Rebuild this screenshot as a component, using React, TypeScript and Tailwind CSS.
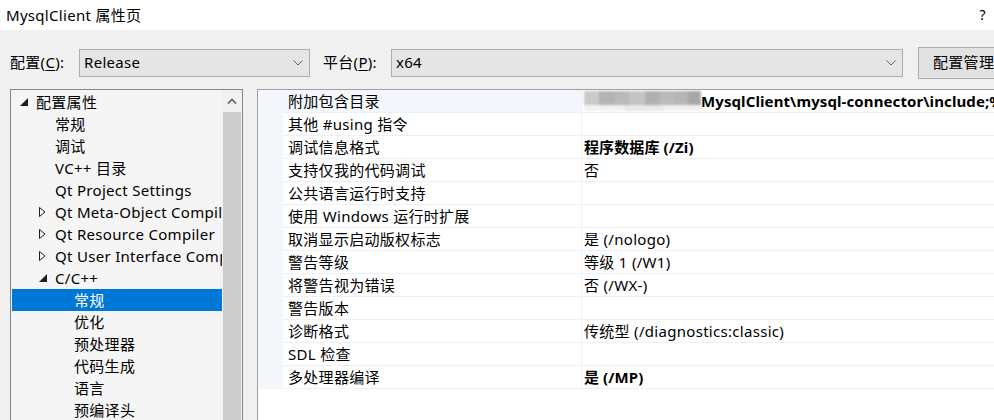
import React from "react";

type TreeItem = {
  label: string;
  level: number;
  arrow?: "open" | "closed";
  selected?: boolean;
};

const treeItems: TreeItem[] = [
  { label: "配置属性", level: 0, arrow: "open" },
  { label: "常规", level: 1 },
  { label: "调试", level: 1 },
  { label: "VC++ 目录", level: 1 },
  { label: "Qt Project Settings", level: 1 },
  { label: "Qt Meta-Object Compiler", level: 1, arrow: "closed" },
  { label: "Qt Resource Compiler", level: 1, arrow: "closed" },
  { label: "Qt User Interface Compiler", level: 1, arrow: "closed" },
  { label: "C/C++", level: 1, arrow: "open" },
  { label: "常规", level: 2, selected: true },
  { label: "优化", level: 2 },
  { label: "预处理器", level: 2 },
  { label: "代码生成", level: 2 },
  { label: "语言", level: 2 },
  { label: "预编译头", level: 2 },
  { label: "输出文件", level: 2 },
];

type PropRow = { name: string; value?: string; bold?: boolean; blurred?: boolean };

const propRows: PropRow[] = [
  { name: "附加包含目录", value: "MysqlClient\\mysql-connector\\include;%(AdditionalIncludeDirectories)", bold: true, blurred: true },
  { name: "其他 #using 指令" },
  { name: "调试信息格式", value: "程序数据库 (/Zi)", bold: true },
  { name: "支持仅我的代码调试", value: "否" },
  { name: "公共语言运行时支持" },
  { name: "使用 Windows 运行时扩展" },
  { name: "取消显示启动版权标志", value: "是 (/nologo)" },
  { name: "警告等级", value: "等级 1 (/W1)" },
  { name: "将警告视为错误", value: "否 (/WX-)" },
  { name: "警告版本" },
  { name: "诊断格式", value: "传统型 (/diagnostics:classic)" },
  { name: "SDL 检查" },
  { name: "多处理器编译", value: "是 (/MP)", bold: true },
];

const Chevron = () => (
  <svg width="10" height="6" viewBox="0 0 10 6" fill="none" stroke="#606060" strokeWidth="1">
    <path d="M0.5 0.5 L5 5 L9.5 0.5" />
  </svg>
);

const Arrow = ({ kind, selected }: { kind: "open" | "closed"; selected?: boolean }) =>
  kind === "open" ? (
    <svg width="8" height="8" viewBox="0 0 8 8">
      <path d="M8 0 L8 8 L0 8 Z" fill={selected ? "#fff" : "#1e1e1e"} />
    </svg>
  ) : (
    <svg width="7" height="10" viewBox="0 0 7 10" fill="none" stroke="#1e1e1e" strokeWidth="1">
      <path d="M0.5 0.5 L6 5 L0.5 9.5 Z" />
    </svg>
  );

const Combo = ({ value, width }: { value: string; width: string }) => (
  <div className={`${width} h-[28px] border border-[#adadad] bg-[#e5e5e5] flex items-center justify-between pl-[4px] pr-[6px] shrink-0`}>
    <span>{value}</span>
    <Chevron />
  </div>
);

export default function App() {
  return (
    <div className="w-[994px] h-[420px] overflow-hidden bg-[#f0f0f0] text-[15px] tracking-[0.3px] text-black font-['Noto_Sans','Noto_Sans_CJK_SC',sans-serif] leading-none">
      {/* title bar */}
      <div className="h-[30px] bg-white flex items-center justify-between pl-[6px] pr-[8px]">
        <span>MysqlClient 属性页</span>
        <span className="text-[14px]">?</span>
      </div>

      {/* configuration row */}
      <div className="flex items-center pl-[10px] pt-[17px] h-[48px] whitespace-nowrap">
        <span className="w-[69px] shrink-0">
          配置(<span className="underline underline-offset-2">C</span>):
        </span>
        <Combo value="Release" width="w-[231px]" />
        <span className="ml-[13px] w-[68px] shrink-0">
          平台(<span className="underline underline-offset-2">P</span>):
        </span>
        <Combo value="x64" width="w-[512px]" />
        <div className="ml-[15px] h-[32px] w-[110px] shrink-0 border border-[#adadad] bg-[#e1e1e1] flex items-center pl-[14px]">
          配置管理器(O)...
        </div>
      </div>

      {/* panels */}
      <div className="flex gap-[14px] pl-[10px] mt-[11px] h-[340px]">
        {/* tree */}
        <div className="w-[233px] shrink-0 border border-[#828790] bg-[#f5f5f5] flex">
          <div className="flex-1 overflow-hidden pt-[1px]">
            {treeItems.map((it, i) => (
              <div
                key={i}
                className={`h-[22px] ml-[1px] flex items-center whitespace-nowrap ${it.selected ? "bg-[#0078d7] text-white" : ""}`}
                style={{ paddingLeft: 7 + it.level * 19 }}
              >
                <span className="w-[17px] shrink-0 flex items-center justify-start pl-[1px]">
                  {it.arrow ? <Arrow kind={it.arrow} selected={it.selected} /> : null}
                </span>
                <span>{it.label}</span>
              </div>
            ))}
          </div>
          <div className="w-[20px] shrink-0 flex flex-col bg-[#f0f0f0]">
            <div className="h-[22px] flex items-center justify-center">
              <svg width="10" height="6" viewBox="0 0 10 6" fill="none" stroke="#606060" strokeWidth="1.6">
                <path d="M1 5.5 L5 1.5 L9 5.5" />
              </svg>
            </div>
            <div className="flex-1 mx-[1px] bg-[#cdcdcd]" />
          </div>
        </div>

        {/* property grid */}
        <div className="flex-1 border-l border-t border-[#a0a0a0] bg-white flex flex-col">
          {propRows.map((r, i) => (
            <div key={i} className="h-[23px] flex shrink-0">
              <div className="w-[25px] shrink-0 bg-[#f3f6fb]" />
              <div
                className={`w-[298px] shrink-0 border-b border-[#edf0f5] flex items-center pl-[5px] whitespace-nowrap ${i === 0 ? "bg-[#f3f6fb]" : ""}`}
              >
                {r.name}
              </div>
              <div className="flex-1 border-l border-b border-[#edf0f5] flex items-center pl-[2px] whitespace-nowrap overflow-hidden">
                {r.blurred ? (
                  <div className="flex flex-col w-[117px] h-[20px] shrink-0 blur-[1px]">
                    <div className="flex h-[14px]">
                      <div className="w-[15px] bg-[#cacaca]" />
                      <div className="w-[16px] bg-[#b3b3b3]" />
                      <div className="w-[14px] bg-[#b9b9b9]" />
                      <div className="w-[16px] bg-[#c4c4c4]" />
                      <div className="w-[15px] bg-[#b0b0b0]" />
                      <div className="w-[14px] bg-[#bababa]" />
                      <div className="w-[14px] bg-[#b6b6b6]" />
                      <div className="w-[13px] bg-[#a8a8a8]" />
                    </div>
                    <div className="flex h-[6px]">
                      <div className="w-[40px] bg-[#f2f2f2]" />
                      <div className="w-[40px] bg-[#e8e8e8]" />
                      <div className="w-[37px] bg-[#f0f0f0]" />
                    </div>
                  </div>
                ) : null}
                {r.value ? (
                  <span className={r.bold ? "font-bold tracking-[0.1px]" : ""}>{r.value}</span>
                ) : null}
              </div>
            </div>
          ))}
          <div className="flex-1" />
        </div>
      </div>
    </div>
  );
}
